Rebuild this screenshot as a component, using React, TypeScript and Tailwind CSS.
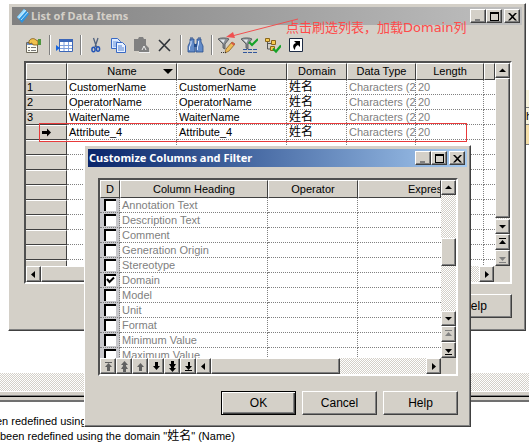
import React from "react";

const RAISED =
  "border border-t-white border-l-white border-r-[#404040] border-b-[#404040] bg-[#d4d0c8] shadow-[inset_-1px_-1px_0_#808080]";
const DITHER =
  "bg-[repeating-conic-gradient(#ffffff_0_25%,#d4d0c8_0_50%)] bg-[length:2px_2px]";
const SUNKEN =
  "border-2 border-t-[#505050] border-l-[#505050] border-r-white border-b-white";
const HEAD =
  "h-[17px] border-t border-l border-t-white border-l-white border-r border-b border-r-[#404040] border-b-[#404040] bg-[#d4d0c8] p-0 text-center font-normal leading-[15px] overflow-hidden whitespace-nowrap";
const CELL = "h-[15px] border-r border-b border-dotted border-[#808080] p-0 pl-[2px]";

type Glyph =
  | "left" | "right" | "up" | "down"
  | "first" | "last" | "lastOff" | "firstOff"
  | "rowTop" | "rowPageUp" | "rowUp" | "rowDown" | "rowPageDown" | "rowBottom"
  | "min" | "max" | "close" | "current";

const PATHS: Record<Glyph, string> = {
  left: "M7 2v7L3 5.5z",
  right: "M4 2v7l4-3.500z",
  up: "M2 7h7L5.500 3.500z",
  down: "M2 4h7L5.500 7.500z",
  first: "M2 1h7v1H2zM2 7h7L5.500 3z",
  last: "M2 9h7v1H2zM2 4h7L5.500 8z",
  firstOff: "M2 1h7v1H2zM2 7h7L5.500 3z",
  lastOff: "M2 9h7v1H2zM2 4h7L5.500 8z",
  rowTop: "M2 1h7v1H2zM5.500 2L9 6H7v4H4V6H2z",
  rowPageUp: "M5.500 0L9 4H7v1l2 3H7v3H4V8H2l2-3V4H2z",
  rowUp: "M5.500 2L9 6H7v4H4V6H2z",
  rowDown: "M5.500 9L9 5H7V1H4v4H2z",
  rowPageDown: "M5.500 11L9 7H7V6l2-3H7V0H4v3H2l2 3v1H2z",
  rowBottom: "M2 9h7v1H2zM5.500 9L9 5H7V1H5v4H2z",
  min: "M2 8h5v2H2z",
  max: "M1 1h9v9H1zM2 3v6h7V3z",
  close: "M1 2h2l2.500 2.500L8 2h2L6.500 5.700 10 9.500H8L5.500 7 3 9.500H1l3.500-3.800z",
  current: "M1 4h5V1.500L10 5.500 6 9.500V7H1z",
};

function Mark({ name, color = "#000" }: { name: Glyph; color?: string }) {
  return (
    <svg width="11" height="11" viewBox="0 0 11 11" className="block shrink-0" aria-hidden="true">
      <path d={PATHS[name]} fill={color} fillRule="evenodd" />
    </svg>
  );
}

function SmallButton({ name, label, color, className }: { name: Glyph; label: string; color?: string; className: string }) {
  return (
    <button type="button" aria-label={label} className={`flex shrink-0 items-center justify-center ${RAISED} ${className}`}>
      <Mark name={name} color={color} />
    </button>
  );
}

function WindowButtons({ minColor }: { minColor?: string }) {
  return (
    <div className="ml-auto flex items-center pr-[2px]">
      <SmallButton name="min" label="Minimize" color={minColor} className="h-[14px] w-4" />
      <SmallButton name="max" label="Maximize" className="h-[14px] w-4" />
      <SmallButton name="close" label="Close" className="ml-[2px] h-[14px] w-4" />
    </div>
  );
}

function PushButton({ children, primary }: { children: string; primary?: boolean }) {
  return (
    <button
      type="button"
      className={`h-6 w-[75px] border text-center text-xs leading-4 ${
        primary
          ? "border-black bg-[#d4d0c8] shadow-[inset_1px_1px_0_#ffffff,inset_-1px_-1px_0_#404040,inset_-2px_-2px_0_#808080]"
          : "border-t-white border-l-white border-r-[#404040] border-b-[#404040] bg-[#d4d0c8] shadow-[inset_-1px_-1px_0_#808080]"
      }`}
    >
      {children}
    </button>
  );
}

function Funnel() {
  return (
    <>
      <path d="M0 2c2-1.500 9-1.500 11 0L7 7v5l-2-1V7z" fill="#8b9095" stroke="#4b4f54" strokeWidth=".8" />
      <path d="M2 2.500h5L5.500 6z" fill="#e4e8ec" />
    </>
  );
}

const TOOLS: Record<string, React.ReactNode> = {
  Properties: (
    <>
      <path d="M1.500 5.500h11v10h-11z" fill="#fdfdf4" stroke="#6f6a5c" />
      <path d="M2 6h10v2H2z" fill="#6d93cf" />
      <path d="M3 10.500h2M6 10.500h5M3 13.500h2M6 13.500h5" stroke="#777" />
      <path d="M4 4c2-3 5-3 7-1l2 1v4L9 8C7 8 7 6 7 6L4 7z" fill="#f1c24c" stroke="#79531b" strokeWidth=".8" />
      <path d="M13 2h3v6h-3z" fill="#4f963f" />
    </>
  ),
  "Insert row": (
    <>
      <path d="M3.500 2.500h13v12h-13z" fill="#fff" stroke="#3b66b8" />
      <path d="M3 2h14v3H3z" fill="#3b66b8" />
      <path d="M8 5v9M12.500 5v9M4 8.500h12M4 11.500h12" stroke="#7fa0dc" />
      <path d="M0 8l4 3-4 3z" fill="#1766e0" />
    </>
  ),
  Cut: (
    <>
      <path d="M6.500 1l3 9M11 1L8 10" stroke="#50627f" strokeWidth="1.300" />
      <ellipse cx="6.500" cy="12.500" rx="1.600" ry="2.300" fill="none" stroke="#2455b5" strokeWidth="1.500" />
      <ellipse cx="11" cy="12" rx="1.600" ry="2.300" fill="none" stroke="#2455b5" strokeWidth="1.500" />
    </>
  ),
  Copy: (
    <>
      <path d="M1.500 1.500h6l3 3v7h-9z" fill="#dbe9ff" stroke="#3969c4" />
      <path d="M3 5h5M3 7h5M3 9h5" stroke="#6f97dc" />
      <path d="M6.500 5.500h6l3 3v7h-9z" fill="#eaf2ff" stroke="#3969c4" />
      <path d="M8 9h4M8 11h6M8 13h6" stroke="#5482d2" />
    </>
  ),
  Paste: (
    <>
      <path d="M1 2h4l1-2h4l1 2h2v6l3 3v5H6v-2H1z" fill="#808080" />
      <path d="M9 13l2-4 2 4M6 15.500h11" stroke="#f0f0f0" fill="none" />
    </>
  ),
  Delete: <path d="M3 3l11 11M14 2L3 14" stroke="#30343a" strokeWidth="1.600" />,
  Find: (
    <>
      <path d="M3 2h4v4l1 2v7H1V9l2-4zM10 2h4v3l2 4v6H9V8l1-2z" fill="#638bc8" stroke="#264d8b" strokeWidth=".8" />
      <path d="M7 7h3v3H7z" fill="#264d8b" />
      <path d="M4 4v3L2.500 10v3M11.500 4v3l-1 3v3" stroke="#dce9ff" fill="none" />
      <path d="M3 1h3M11 1h3" stroke="#264d8b" />
    </>
  ),
  "Customize columns and filter": (
    <>
      <Funnel />
      <path d="M8 12l6-7 3 2-6 7-4 2z" fill="#efbd58" stroke="#896125" strokeWidth=".8" />
      <path d="M14 5l3 2-1 1.500-3-2z" fill="#d85745" />
      <path d="M3 15.500h6" stroke="#333" strokeDasharray="1 1" />
    </>
  ),
  "Enable filter": (
    <>
      <Funnel />
      <path d="M8 5l3 3 6-6" stroke="#16a329" strokeWidth="2.200" fill="none" />
      <path d="M2 12.500h14M2 15.500h14" stroke="#31579d" strokeWidth="1.200" strokeDasharray="4 1" />
    </>
  ),
  "Select scope": (
    <>
      <path d="M3.500 3v9H8M4 6.500h4" stroke="#555" fill="none" />
      <path d="M1.500 1.500h4v3h-4zM7.500 3.500h4v4h-4zM6.500 9.500h4v4h-4z" fill="#f6cb51" stroke="#8a661c" />
      <path d="M9 11.500l3 3 5-6" stroke="#16a329" strokeWidth="2.200" fill="none" />
    </>
  ),
  "Open shortcut": (
    <>
      <path d="M2.500 1.500h13v13h-13z" fill="#fff" stroke="#1f2c45" />
      <path d="M7 4h6v6l-2-2c-2 1-3 2-3 5-3-3-2-6 1-7z" fill="#000" />
    </>
  ),
};

const TOOL_GROUPS = [
  ["Properties"],
  ["Insert row"],
  ["Cut", "Copy", "Paste", "Delete"],
  ["Find"],
  ["Customize columns and filter", "Enable filter", "Select scope", "Open shortcut"],
];

function Toolbar() {
  return (
    <div className="flex h-9 items-center pt-1 pl-[10px]">
      {TOOL_GROUPS.map((group, i) => (
        <div key={group[0]} className="flex items-center">
          {i > 0 && <span className="mr-[3px] ml-1 h-5 w-px bg-[#808080] shadow-[1px_0_0_#ffffff]" />}
          {group.map((name) => (
            <button key={name} type="button" aria-label={name} className="flex h-6 w-[23px] items-center justify-center">
              <svg width="17" height="17" viewBox="0 0 17 17" fill="none" aria-hidden="true">
                {TOOLS[name]}
              </svg>
            </button>
          ))}
        </div>
      ))}
    </div>
  );
}

const ITEMS = ["CustomerName", "OperatorName", "WaiterName", "Attribute_4"];
const HAN = "text-xs";

function ItemsWindow() {
  return (
    <section className={`absolute top-[3px] right-[3px] left-2 p-[3px] ${RAISED}`}>
      <header className="flex h-[18px] items-center bg-linear-to-r from-[#808080] to-[#c0c0c0] pl-[5px]">
        <svg width="12" height="16" viewBox="0 0 12 16" aria-hidden="true">
          <path d="M0 9L7 1l5 5-7 9z" fill="#2e94df" />
          <path d="M0 9L7 1l2 2-7 8z" fill="#9bdcff" />
          <path d="M2 10l7-8M4 12l7-8" stroke="#d7f2ff" strokeWidth=".8" />
        </svg>
        <h1 className="ml-[2px] font-['Noto_Sans',sans-serif] text-[11px] leading-4 font-bold text-[#d4d0c8]">List of Data Items</h1>
        <WindowButtons minColor="#808080" />
      </header>
      <Toolbar />
      <div className={`mr-[10px] ml-3 ${SUNKEN}`}>
        <div className="flex h-[203px]">
          <div className="min-w-0 flex-1 overflow-hidden bg-white">
            <table className="w-full table-fixed border-separate border-spacing-0">
              <colgroup>
                <col className="w-[41px]" />
                <col className="w-[110px]" />
                <col className="w-[110px]" />
                <col className="w-[60px]" />
                <col className="w-[69px]" />
                <col className="w-[68px]" />
                <col />
              </colgroup>
              <thead>
                <tr>
                  <th className={HEAD} />
                  <th className={HEAD}>
                    <div className="flex items-center">
                      <span className="flex-1 pl-[14px]">Name</span>
                      <svg width="14" height="6" viewBox="0 0 14 6" aria-hidden="true"><path d="M1 0h10L6 5z" /></svg>
                    </div>
                  </th>
                  <th className={HEAD}>Code</th>
                  <th className={HEAD}>Domain</th>
                  <th className={HEAD}>Data Type</th>
                  <th className={HEAD}>Length</th>
                  <th className={HEAD} />
                </tr>
              </thead>
              <tbody>
                {Array.from({ length: 13 }, (_, i) => (
                  <tr key={i}>
                    <th className="h-[15px] border-t border-r border-b border-t-white border-r-[#404040] border-b-[#404040] bg-[#d4d0c8] p-0 text-left font-normal">
                      <div className="flex h-[13px] items-center pl-px leading-[13px]">
                        {i < 3 ? i + 1 : null}
                        {i === 3 && <span className="ml-[14px]"><Mark name="current" /></span>}
                      </div>
                    </th>
                    <td className={CELL}><div className="h-[14px] leading-[14px]">{ITEMS[i]}</div></td>
                    <td className={CELL}><div className="h-[14px] leading-[14px]">{ITEMS[i]}</div></td>
                    <td className={CELL}><div className={`h-[14px] leading-[14px] ${HAN}`}>{i < 4 ? "姓名" : ""}</div></td>
                    <td className={`${CELL} text-[#808080]`}>
                      <div className="h-[14px] leading-[14px] whitespace-nowrap">{i < 4 ? "Characters (2" : ""}</div>
                    </td>
                    <td className={`${CELL} text-[#808080]`}><div className="h-[14px] leading-[14px]">{i < 4 ? "20" : ""}</div></td>
                    <td className="border-b border-dotted border-[#808080] p-0" />
                  </tr>
                ))}
              </tbody>
            </table>
          </div>
          <div className={`flex w-[15px] flex-col ${DITHER}`}>
            <SmallButton name="up" label="Scroll up" className="h-[15px] w-full" />
            <div className={`flex-1 ${RAISED}`} />
            <SmallButton name="down" label="Scroll down" className="mt-px h-[15px] w-full" />
            <SmallButton name="first" label="First item" className="h-4 w-full" />
            <SmallButton name="lastOff" label="Last item" color="#808080" className="h-4 w-full" />
          </div>
        </div>
        <div className="flex h-4 bg-[#d4d0c8] pr-4">
          <SmallButton name="left" label="Scroll left" className="h-4 w-[15px]" />
          <div className={`flex flex-1 ${DITHER}`}>
            <div className={`w-4/5 ${RAISED}`} />
          </div>
          <SmallButton name="right" label="Scroll right" className="h-4 w-[15px]" />
        </div>
      </div>
      <div className="flex justify-end pt-[10px] pr-[10px] pb-[9px]">
        <PushButton>Help</PushButton>
      </div>
    </section>
  );
}

const COLUMNS = [
  "Annotation Text", "Description Text", "Comment", "Generation Origin", "Stereotype", "Domain",
  "Model", "Unit", "Format", "Minimum Value", "Maximum Value",
];

const ROW_MOVES: { name: Glyph; label: string; color?: string }[] = [
  { name: "rowTop", label: "Move to top", color: "#606060" },
  { name: "rowPageUp", label: "Move page up", color: "#606060" },
  { name: "rowUp", label: "Move up", color: "#606060" },
  { name: "rowDown", label: "Move down" },
  { name: "rowPageDown", label: "Move page down" },
  { name: "rowBottom", label: "Move to bottom" },
];

function FilterWindow() {
  return (
    <section className={`absolute top-[145px] left-[84px] w-[387px] p-[3px] ${RAISED}`}>
      <header className="flex h-[18px] items-center bg-linear-to-r from-[#0a246a] to-[#a6caf0] pl-px">
        <h2 className="font-['Noto_Sans',sans-serif] text-[11px] leading-4 font-bold text-white">Customize Columns and Filter</h2>
        <WindowButtons minColor="#808080" />
      </header>
      <div className={`mt-[11px] mr-[9px] ml-[10px] ${SUNKEN}`}>
        <div className="flex h-[178px]">
          <div className="min-w-0 flex-1 overflow-hidden bg-white">
            <table className="w-full table-fixed border-separate border-spacing-0">
              <colgroup>
                <col className="w-5" />
                <col className="w-[148px]" />
                <col className="w-[90px]" />
                <col />
              </colgroup>
              <thead>
                <tr className="h-[18px]">
                  <th className={HEAD}>D</th>
                  <th className={HEAD}>Column Heading</th>
                  <th className={HEAD}>Operator</th>
                  <th className={HEAD}><div className="pl-[49px] text-left">Expression</div></th>
                </tr>
              </thead>
              <tbody>
                {COLUMNS.map((name, i) => (
                  <tr key={name}>
                    <td className="h-[15px] border-r border-b border-dotted border-[#808080] bg-[#c8c8cc] p-0">
                      <div className="relative ml-1 h-[14px] w-3 pt-px">
                        <input
                          id={`column-${i}`}
                          type="checkbox"
                          defaultChecked={name === "Domain"}
                          className="peer block h-3 w-3 appearance-none border-t-2 border-l-2 border-black bg-white"
                        />
                        <svg width="9" height="9" viewBox="0 0 9 9" className="pointer-events-none absolute top-[3px] left-[2px] hidden peer-checked:block" aria-hidden="true">
                          <path d="M1 3l2.500 3L8 1.500" fill="none" stroke="#000" strokeWidth="2" />
                        </svg>
                      </div>
                    </td>
                    <td className={`${CELL} text-[#808080]`}>
                      <label htmlFor={`column-${i}`} className="block h-[14px] leading-[14px]">{name}</label>
                    </td>
                    <td className={CELL} />
                    <td className="border-b border-dotted border-[#808080] p-0" />
                  </tr>
                ))}
              </tbody>
            </table>
          </div>
          <div className={`flex w-[15px] flex-col ${DITHER}`}>
            <SmallButton name="up" label="Scroll up" className="h-[15px] w-full" />
            <div className={`mt-[43px] h-7 ${RAISED}`} />
            <SmallButton name="down" label="Scroll down" className="mt-auto h-[15px] w-full" />
            <SmallButton name="firstOff" label="First column" color="#808080" className="h-4 w-full" />
            <SmallButton name="last" label="Last column" className="h-4 w-full" />
          </div>
        </div>
        <div className="flex h-4 bg-[#d4d0c8] pr-[15px]">
          {ROW_MOVES.map((move) => (
            <SmallButton key={move.label} {...move} className="h-4 w-4" />
          ))}
          <SmallButton name="left" label="Scroll left" className="h-4 w-[15px]" />
          <div className={`flex flex-1 ${DITHER}`}>
            <div className={`w-3/5 ${RAISED}`} />
          </div>
          <SmallButton name="right" label="Scroll right" className="h-4 w-[15px]" />
        </div>
      </div>
      <div className="flex justify-end gap-[6px] pt-[15px] pr-[9px] pb-2">
        <PushButton primary>OK</PushButton>
        <PushButton>Cancel</PushButton>
        <PushButton>Help</PushButton>
      </div>
    </section>
  );
}

export default function App() {
  return (
    <main className="relative flex h-screen flex-col overflow-hidden bg-white font-['Liberation_Sans','Noto_Sans_CJK_SC',sans-serif] text-[11px] text-black">
      <div className="flex flex-1 flex-col items-end pt-[90px]">
        <div className="w-2 border-b border-[#808080] bg-[#f7f3dc] pt-[17px]" />
        <div className="w-2 border-b border-[#808080] bg-[#f7f3dc] pl-[5px] leading-4">h</div>
        <div className="h-5 w-2 border-b border-[#808080] bg-[#f5dfa8]" />
      </div>
      <div className={`h-[18px] ${DITHER}`} />
      <div className="h-[11px] border-t border-b-2 border-t-white border-b-[#707070] bg-[#d4d0c8] pt-[3px]">
        <div className="h-[2px] border-t border-b border-t-[#808080] border-b-black" />
      </div>
      <div className="h-[41px] overflow-hidden pt-[13px] leading-[13px] whitespace-nowrap">
        <p className="-ml-1 h-[13px]">en redefined using</p>
        <p className="h-[13px]">
          been redefined using the domain "<span className={HAN}>姓名</span>" (Name)
        </p>
      </div>

      <ItemsWindow />
      <div className="absolute top-[123px] right-[62px] left-[39px] h-[19px] border border-[#e83a3a]" />
      <svg className="absolute top-4 left-[224px]" width="78" height="24" viewBox="0 0 78 24" aria-hidden="true">
        <path d="M74 3L8 20" stroke="#f05050" />
        <path d="M2 21l7-5 2 6z" fill="#f05050" />
      </svg>
      <p className="absolute top-[19px] left-[286px] font-['DejaVu_Sans','Noto_Sans_CJK_SC',sans-serif] text-[13px] leading-[18px] whitespace-nowrap text-[#ff4a4a]">
        点击刷选列表，加载Domain列
      </p>
      <FilterWindow />
    </main>
  );
}
